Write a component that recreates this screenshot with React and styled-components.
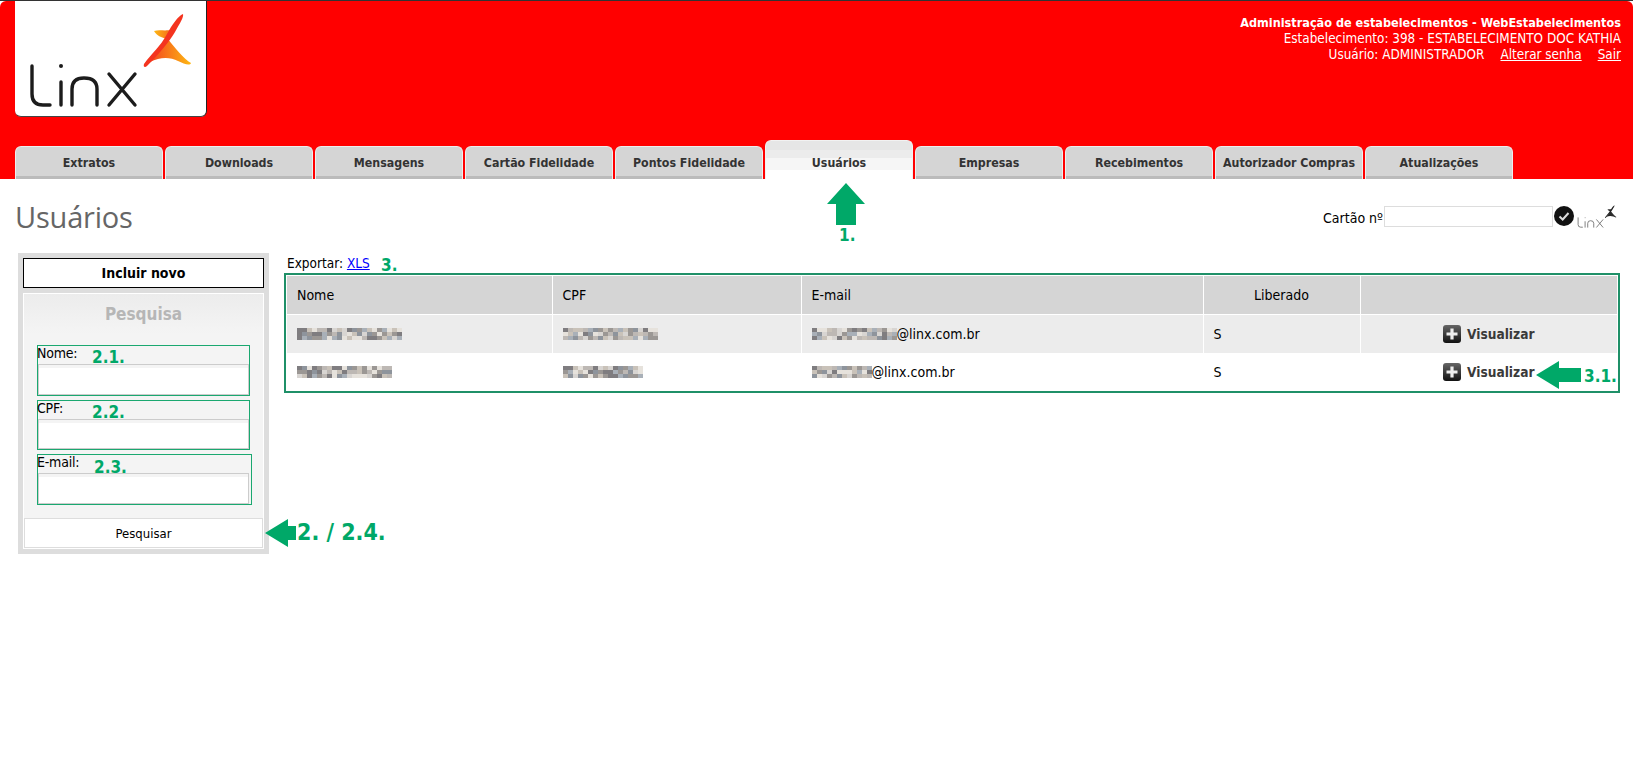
import React from "react";
import styled, { createGlobalStyle } from "styled-components";

const GlobalStyle = createGlobalStyle`
  html, body { margin: 0; padding: 0; background: #fff; }
  body { font-family: "DejaVu Sans Condensed", "DejaVu Sans", sans-serif; font-size: 13px; color: #000; }
`;

const green = "#00a868";

const Page = styled.div`
  position: relative;
  width: 1633px;
  height: 781px;
  overflow: hidden;
  border-top: 1px solid #333;
  box-sizing: border-box;
`;
const Header = styled.header`
  height: 178px;
  background: #ff0000;
  border-radius: 6px 6px 0 0;
  padding: 0 12px 0 15px;
  display: flex;
  flex-direction: column;
  justify-content: space-between;
`;
const HeaderTop = styled.div`
  display: flex;
  justify-content: space-between;
  align-items: flex-start;
`;
const LogoBox = styled.div`
  width: 192px;
  height: 116px;
  background: #fff;
  border-radius: 0 0 6px 6px;
  border-right: 1px solid #222;
  border-bottom: 1px solid #444;
  box-sizing: border-box;
`;
const HeaderInfo = styled.div`
  padding-top: 14px;
  color: #fff;
  text-align: right;
  line-height: 16px;
  font-size: 13.4px;
`;
const HeaderTitle = styled.div`
  font-weight: bold;
  font-size: 12.55px;
`;
const HeaderLink = styled.a`
  color: #fff;
  text-decoration: underline;
  margin-left: 16px;
`;
const Tabs = styled.nav`
  display: flex;
  align-items: flex-end;
  gap: 2px;
`;
const Tab = styled.div`
  width: 148px;
  height: ${(p) => (p.$active ? 39 : 33)}px;
  box-sizing: border-box;
  border: 1px solid #eee;
  border-bottom: 0;
  border-radius: 6px 6px 0 0;
  font-weight: bold;
  font-size: 12.3px;
  color: #333;
  display: flex;
  justify-content: center;
  padding-top: ${(p) => (p.$active ? 15 : 9)}px;
  background: ${(p) =>
    p.$active
      ? "linear-gradient(#e6e6e6 0 9px, #ececec 9px 17px, #f6f6f6 17px 29px, #fff 29px)"
      : "linear-gradient(#d5d5d5 0 29px, #bbb 29px)"};
  border-color: ${(p) => (p.$active ? "#f2f2f2" : "#eee")};
`;
const TopRow = styled.div`
  height: 74px;
  padding: 23px 13px 0 15px;
  box-sizing: border-box;
  display: flex;
  justify-content: space-between;
  align-items: flex-start;
`;
const Title = styled.h1`
  margin: -5px 0 0;
  font-family: "Open Sans", sans-serif;
  font-weight: 400;
  font-size: 29px;
  line-height: 40px;
  letter-spacing: -0.2px;
  color: #666;
`;
const CardForm = styled.div`
  display: flex;
  align-items: center;
  font-size: 14px;
`;
const CardLabel = styled.label`
  padding-top: 4px;
`;
const CardInput = styled.input`
  width: 169px;
  height: 21px;
  box-sizing: border-box;
  border: 1px solid #ddd;
  margin: 0 1px 0 1px;
  padding: 0;
`;
const Content = styled.main`
  display: flex;
  align-items: flex-start;
  padding-left: 18px;
  gap: 15px;
`;
const SidePanel = styled.aside`
  width: 251px;
  height: 301px;
  background: #ddd;
  padding: 5px;
  box-sizing: border-box;
  display: flex;
  flex-direction: column;
  gap: 5px;
`;
const NewButton = styled.div`
  height: 30px;
  background: #fff;
  border: 1px solid #000;
  box-sizing: border-box;
  font-weight: bold;
  font-size: 14px;
  display: flex;
  align-items: center;
  justify-content: center;
`;
const SearchBox = styled.div`
  flex: 1;
  border: 1px solid #fff;
  background: linear-gradient(#ececec, #f4f4f4 40px);
  display: flex;
  flex-direction: column;
  align-items: flex-start;
`;
const SearchTitle = styled.div`
  align-self: stretch;
  text-align: center;
  font-weight: bold;
  font-size: 17px;
  line-height: 20px;
  color: #b6b6b6;
  padding: 10px 0 21px;
`;
const Field = styled.div`
  width: ${(p) => p.$width}px;
  height: ${(p) => p.$height}px;
  margin: 0 0 4px 13px;
  border: 1px solid #1aa870;
  box-sizing: border-box;
  display: flex;
  flex-direction: column;
`;
const FieldLabel = styled.label`
  font-size: 14px;
  line-height: 15px;
  height: 18px;
  margin-left: -1px;
  letter-spacing: -0.2px;
`;
const FieldInput = styled.div`
  width: 211px;
  flex: 1;
  border: 1px solid #ccc;
  box-sizing: border-box;
  background: linear-gradient(#f4f4f4 0 3px, #fff 3px);
`;
const SearchButton = styled.div`
  align-self: center;
  width: 239px;
  height: 30px;
  margin-top: 9px;
  background: #fff;
  border: 1px solid #ddd;
  box-sizing: border-box;
  font-size: 13px;
  display: flex;
  align-items: center;
  justify-content: center;
`;
const Results = styled.section`
  width: 1336px;
`;
const ExportRow = styled.div`
  height: 20px;
  padding-left: 3px;
  font-size: 13.5px;
  line-height: 20px;
  a { color: #00f; text-decoration: underline; }
`;
const TableFrame = styled.div`
  border: 2px solid #1f9068;
  box-sizing: border-box;
  height: 120px;
  padding: 1px;
`;
const Table = styled.table`
  width: 100%;
  border-collapse: collapse;
  table-layout: fixed;
  font-size: 14px;
`;
const Th = styled.th`
  box-sizing: border-box;
  background: #d5d5d5;
  font-weight: normal;
  height: 38px;
  padding: 0 0 0 ${(p) => (p.$center ? 0 : 10)}px;
  text-align: ${(p) => (p.$center ? "center" : "left")};
  border: 1px solid #fff;
  border-width: 0 1px 1px 0;
  width: ${(p) => (p.$width ? `${p.$width}px` : "auto")};
  &:last-child { border-right: 0; }
`;
const Td = styled.td`
  height: 38px;
  padding: 0 0 0 10px;
  border-right: 1px solid ${(p) => (p.$odd ? "#fff" : "transparent")};
  background: ${(p) => (p.$odd ? "#ececec" : "#fff")};
  &:last-child { border-right: 0; padding-left: 0; }
`;
const EmailCell = styled.div`
  display: flex;
  align-items: center;
`;
const Blur = styled.span`
  display: grid;
  grid-template-columns: repeat(${(p) => p.$cols}, 5px);
  grid-auto-rows: 4px;
`;
const BlurDot = styled.i`
  display: block;
  background: ${(p) => p.$tone};
`;
const ViewAction = styled.div`
  display: flex;
  justify-content: center;
  align-items: center;
  gap: 6px;
  font-weight: bold;
  font-size: 13.6px;
  color: #3a3a3a;
`;
const Note = styled.span`
  position: absolute;
  left: ${(p) => p.$x}px;
  top: ${(p) => p.$y}px;
  color: ${green};
  font-family: "DejaVu Sans Condensed", "DejaVu Sans", sans-serif;
  font-weight: bold;
  font-size: ${(p) => p.$size || 17}px;
  line-height: 1;
  white-space: nowrap;
`;
const ArrowMark = styled.svg`
  position: absolute;
  left: ${(p) => p.$x}px;
  top: ${(p) => p.$y}px;
  fill: ${green};
`;

function LinxLogo({ width, height, mono }) {
  const ink = mono ? "#666" : "#1c1c1c";
  const id = mono ? "logoMono" : "logoColor";
  return (
    <svg width={width} height={height} viewBox="15 0 191 115">
      <defs>
        <linearGradient id={`${id}Right`} x1="0" y1="0.5" x2="1" y2="0.5">
          <stop offset="0" stopColor={mono ? "#222" : "#f4451f"} />
          <stop offset="1" stopColor={mono ? "#333" : "#fdb813"} />
        </linearGradient>
        <linearGradient id={`${id}Left`} x1="0" y1="0.5" x2="1" y2="0.5">
          <stop offset="0" stopColor={mono ? "#333" : "#fdb813"} />
          <stop offset="1" stopColor={mono ? "#222" : "#f4661c"} />
        </linearGradient>
      </defs>
      <g fill="none" stroke={ink} strokeWidth="3.4" strokeLinecap="round" strokeLinejoin="round">
        <path d="M32 65 V93 Q32 104 43 104 H50" />
        <path d="M61 81 V104" />
        <path d="M72 104 V88 Q72 77 84 77 Q97 77 97 88 V104" />
        <path d="M109 73 L135 104 M135 73 L109 104" />
      </g>
      <circle cx="61" cy="65" r="2" fill={ink} />
      <path fill={`url(#${id}Left)`} d="M154 30 C160 28 166 31 172 28 L168 38 C162 37 157 35 154 30 Z" />
      <path
        fill={`url(#${id}Right)`}
        d="M168 38 C174 46 184 58 191 62 C190 65 184 63 178 60 C170 56 160 56 150 61 L160 48 Z"
      />
      <path
        fill={mono ? "#222" : "#f4341f"}
        d="M183 13 C184 16 180 22 175 31 C170 40 158 54 147 65 C145 67 143 66 144 63 C152 52 160 46 167 33 C172 24 178 15 183 13 Z"
      />
    </svg>
  );
}

function BlurText({ cols, seed }) {
  const tones = ["#9b9794", "#bdb8b4", "#d8d5d2", "#a9b0b8", "#7f7d80", "#c9c2b9", "#e6e2dc", "#8e949c"];
  let n = seed * 7919;
  const dots = [];
  for (let i = 0; i < cols * 3; i++) {
    n = (n * 1103515245 + 12345) % 2147483648;
    dots.push(<BlurDot key={i} $tone={tones[Math.floor(n / 65536) % tones.length]} />);
  }
  return <Blur $cols={cols}>{dots}</Blur>;
}

function PlusIcon() {
  return (
    <svg width="18" height="18" viewBox="0 0 18 18">
      <defs>
        <linearGradient id="plusBg" x1="0" y1="0" x2="0" y2="1">
          <stop offset="0" stopColor="#666" />
          <stop offset="1" stopColor="#111" />
        </linearGradient>
      </defs>
      <rect width="18" height="18" rx="3" fill="url(#plusBg)" />
      <path d="M7.4 3.5h3.2v3.9h3.9v3.2h-3.9v3.9H7.4v-3.9H3.5V7.4h3.9z" fill="#eee" />
    </svg>
  );
}

const UpArrow = ({ x, y }) => (
  <ArrowMark $x={x} $y={y} width="38" height="42" viewBox="0 0 38 42">
    <path d="M19 0 L38 21 H29 V42 H9 V21 H0 Z" />
  </ArrowMark>
);
const LeftArrow = ({ x, y, width }) => (
  <ArrowMark $x={x} $y={y} width={width} height="28" viewBox={`0 0 ${width} 28`}>
    <path d={`M0 14 L23 0 V7 H${width} V21 H23 V28 Z`} />
  </ArrowMark>
);

const tabs = [
  "Extratos", "Downloads", "Mensagens", "Cartão Fidelidade", "Pontos Fidelidade", "Usuários",
  "Empresas", "Recebimentos", "Autorizador Compras", "Atualizações",
];
const users = [
  { name: 21, cpf: 19, mail: 17, seed: 5, tail: "@linx.com.br" },
  { name: 19, cpf: 16, mail: 12, seed: 3, tail: "@linx.com.br" },
];

export default function App() {
  return (
    <Page>
      <GlobalStyle />
      <Header>
        <HeaderTop>
          <LogoBox>
            <LinxLogo width={191} height={115} />
          </LogoBox>
          <HeaderInfo>
            <HeaderTitle>Administração de estabelecimentos - WebEstabelecimentos</HeaderTitle>
            <div>Estabelecimento: 398 - ESTABELECIMENTO DOC KATHIA</div>
            <div>
              Usuário: ADMINISTRADOR
              <HeaderLink>Alterar senha</HeaderLink>
              <HeaderLink>Sair</HeaderLink>
            </div>
          </HeaderInfo>
        </HeaderTop>
        <Tabs>
          {tabs.map((t) => (
            <Tab key={t} $active={t === "Usuários"}>{t}</Tab>
          ))}
        </Tabs>
      </Header>
      <TopRow>
        <Title>Usuários</Title>
        <CardForm>
          <CardLabel>Cartão nº</CardLabel>
          <CardInput />
          <svg width="20" height="20" viewBox="0 0 20 20">
            <circle cx="10" cy="10" r="10" fill="#111" />
            <path d="M5.5 10.5 L8.7 13.5 L14.5 7" fill="none" stroke="#ddd" strokeWidth="2" />
          </svg>
          <LinxLogo width={46} height={28} mono />
        </CardForm>
      </TopRow>
      <Content>
        <SidePanel>
          <NewButton>Incluir novo</NewButton>
          <SearchBox>
            <SearchTitle>Pesquisa</SearchTitle>
            <Field $width={213} $height={51}>
              <FieldLabel>Nome:</FieldLabel>
              <FieldInput />
            </Field>
            <Field $width={213} $height={50}>
              <FieldLabel>CPF:</FieldLabel>
              <FieldInput />
            </Field>
            <Field $width={215} $height={51}>
              <FieldLabel>E-mail:</FieldLabel>
              <FieldInput />
            </Field>
            <SearchButton>Pesquisar</SearchButton>
          </SearchBox>
        </SidePanel>
        <Results>
          <ExportRow>
            Exportar: <a>XLS</a>
          </ExportRow>
          <TableFrame>
            <Table>
              <thead>
                <tr>
                  <Th $width={265}>Nome</Th>
                  <Th $width={249}>CPF</Th>
                  <Th $width={402}>E-mail</Th>
                  <Th $width={157} $center>Liberado</Th>
                  <Th />
                </tr>
              </thead>
              <tbody>
                {users.map((u, i) => (
                  <tr key={u.seed}>
                    <Td $odd={i === 0}><BlurText cols={u.name} seed={u.seed} /></Td>
                    <Td $odd={i === 0}><BlurText cols={u.cpf} seed={u.seed + 2} /></Td>
                    <Td $odd={i === 0}>
                      <EmailCell>
                        <BlurText cols={u.mail} seed={u.seed + 4} />
                        {u.tail}
                      </EmailCell>
                    </Td>
                    <Td $odd={i === 0}>S</Td>
                    <Td $odd={i === 0}>
                      <ViewAction><PlusIcon />Visualizar</ViewAction>
                    </Td>
                  </tr>
                ))}
              </tbody>
            </Table>
          </TableFrame>
        </Results>
      </Content>

      <UpArrow x={827} y={182} />
      <Note $x={839} $y={226}>1.</Note>
      <Note $x={381} $y={256}>3.</Note>
      <Note $x={92} $y={348}>2.1.</Note>
      <Note $x={92} $y={403}>2.2.</Note>
      <Note $x={94} $y={458}>2.3.</Note>
      <LeftArrow x={265} y={518} width={31} />
      <Note $x={297} $y={520} $size={23}>2. / 2.4.</Note>
      <LeftArrow x={1536} y={360} width={45} />
      <Note $x={1584} $y={367}>3.1.</Note>
    </Page>
  );
}
